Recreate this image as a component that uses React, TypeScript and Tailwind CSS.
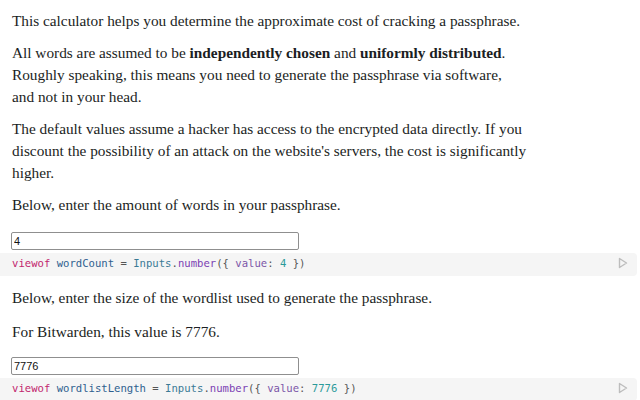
import React from "react";

const serif = { fontFamily: '"Liberation Serif", "DejaVu Serif", serif' };

const PlayIcon = () => (
  <svg width="10" height="12" viewBox="0 0 10 12" fill="none">
    <path
      d="M1.5 1.5 L8.5 6 L1.5 10.5 Z"
      stroke="#bdbdbd"
      strokeWidth="1.4"
      strokeLinejoin="round"
    />
  </svg>
);

const NumberCell = ({
  name,
  value,
}: {
  name: string;
  value: string;
}) => {
  return (
    <div className="flex flex-col">
      <div className="pl-[11px]">
        <input
          type="text"
          defaultValue={value}
          className="w-[288px] h-[18px] border border-[#8f8f8f] rounded-[2px] px-[2px] text-[11px] text-[#111] bg-white outline-none"
          style={{ fontFamily: '"Liberation Sans", Arial, sans-serif' }}
        />
      </div>
      <div className="mt-[2px] h-[23px] w-[637px] bg-[#f5f5f5] rounded-r-[4px] flex items-center justify-between pl-[12px] pr-[9px] pb-[3px]">
        <code
          className="text-[10.6px] whitespace-pre"
          style={{ fontFamily: '"DejaVu Sans Mono", monospace' }}
        >
          <span className="text-[#c2266e]">viewof</span>{" "}
          <span className="text-[#2f5f8f]">{name}</span>
          <span className="text-[#555]"> = </span>
          <span className="text-[#3a7a95]">Inputs</span>
          <span className="text-[#555]">.</span>
          <span className="text-[#7b3fb3]">number</span>
          <span className="text-[#555]">{"({ "}</span>
          <span className="text-[#7c56a8]">value</span>
          <span className="text-[#555]">: </span>
          <span className="text-[#2a9a9a]">{value}</span>
          <span className="text-[#555]">{" })"}</span>
        </code>
        <PlayIcon />
      </div>
    </div>
  );
};

export default function App() {
  return (
    <main
      className="w-[640px] h-[400px] overflow-hidden bg-white text-[#1b1e23] text-[15.3px] leading-[22px] pt-[10px]"
      style={serif}
    >
      <div className="px-[12px] flex flex-col gap-[10px] w-[560px]">
        <p>
          This calculator helps you determine the approximate cost of cracking
          a passphrase.
        </p>
        <p>
          All words are assumed to be <b>independently chosen</b> and{" "}
          <b>uniformly distributed</b>.
          <br />
          Roughly speaking, this means you need to generate the passphrase via
          software,
          <br />
          and not in your head.
        </p>
        <p>
          The default values assume a hacker has access to the encrypted data
          directly. If you
          <br />
          discount the possibility of an attack on the website's servers, the
          cost is significantly
          <br />
          higher.
        </p>
        <p>Below, enter the amount of words in your passphrase.</p>
      </div>
      <div className="mt-[13px]">
        <NumberCell name="wordCount" value="4" />
      </div>
      <div className="px-[12px] flex flex-col gap-[12px] mt-[11px] w-[560px]">
        <p>Below, enter the size of the wordlist used to generate the passphrase.</p>
        <p>For Bitwarden, this value is 7776.</p>
      </div>
      <div className="mt-[11px]">
        <NumberCell name="wordlistLength" value="7776" />
      </div>
    </main>
  );
}
